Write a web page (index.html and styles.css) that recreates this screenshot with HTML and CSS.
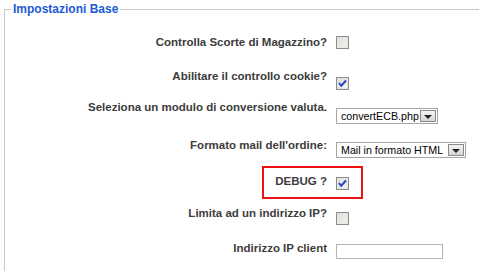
FILE: index.html
```html
<!DOCTYPE html>
<html lang="it">
<head>
    <meta charset="UTF-8">
    <title>Impostazioni Base</title>
    <link rel="stylesheet" href="styles.css">
</head>
<body>
    <fieldset class="settings">
        <legend>Impostazioni Base</legend>
        <div class="rows">
            <div class="row">
                <label class="row-label">Controlla Scorte di Magazzino?</label>
                <div class="row-value up">
                    <span class="checkbox"></span>
                </div>
            </div>
            <div class="row">
                <label class="row-label">Abilitare il controllo cookie?</label>
                <div class="row-value down">
                    <span class="checkbox checked">
                        <svg width="11" height="11" viewBox="0 0 11 11"><path d="M2 5 L4.2 7.8 L9 2.5" fill="none" stroke="#2340c8" stroke-width="2"/></svg>
                    </span>
                </div>
            </div>
            <div class="row">
                <label class="row-label">Seleziona un modulo di conversione valuta.</label>
                <div class="row-value">
                    <div class="select select-small">
                        <span class="select-text">convertECB.php</span>
                        <span class="select-arrow"></span>
                    </div>
                </div>
            </div>
            <div class="row">
                <label class="row-label">Formato mail dell'ordine:</label>
                <div class="row-value">
                    <div class="select select-wide">
                        <span class="select-text">Mail in formato HTML</span>
                        <span class="select-arrow"></span>
                    </div>
                </div>
            </div>
            <div class="row">
                <label class="row-label">DEBUG ?</label>
                <div class="row-value mid">
                    <span class="checkbox checked">
                        <svg width="11" height="11" viewBox="0 0 11 11"><path d="M2 5 L4.2 7.8 L9 2.5" fill="none" stroke="#2340c8" stroke-width="2"/></svg>
                    </span>
                </div>
                <div class="mark"></div>
            </div>
            <div class="row">
                <label class="row-label">Limita ad un indirizzo IP?</label>
                <div class="row-value low">
                    <span class="checkbox"></span>
                </div>
            </div>
            <div class="row">
                <label class="row-label">Indirizzo IP client</label>
                <div class="row-value mid">
                    <span class="text-input"></span>
                </div>
            </div>
        </div>
    </fieldset>
</body>
</html>
```

FILE: styles.css
```css
html, body {
    height: 100%;
}
body {
    margin: 0;
    background: #ffffff;
    font-family: "Liberation Sans", Arial, sans-serif;
    overflow: hidden;
}
.settings {
    margin: 2px 0 0 4px;
    padding: 0;
    border: none;
    border-top: 1px solid #c8c8c8;
    border-left: 1px solid #c8c8c8;
    height: 269px;
    box-sizing: border-box;
}
.settings legend {
    font-size: 12px;
    font-weight: bold;
    color: #1a5ad6;
    padding: 0 2px;
    margin-left: 6px;
    line-height: 14px;
}
.rows {
    display: grid;
    grid-template-rows: 34px 31px 38px 36px 32px 35px 30px;
    margin-top: 19px;
}
.row {
    display: flex;
    align-items: flex-start;
    position: relative;
}
.row-label {
    width: 322px;
    text-align: right;
    font-size: 11.5px;
    font-weight: bold;
    color: #3c3c3c;
    line-height: 14px;
    white-space: nowrap;
}
.row-value {
    margin-left: 9px;
}
.row-value.up { margin-top: 1px; }
.row-value.mid { margin-top: 3px; }
.row-value.low { margin-top: 6px; }
.row-value.down { margin-top: 8px; }
.row:nth-child(3) .row-value { margin-top: 8px; }
.row:nth-child(4) .row-value { margin-top: 4px; }
.checkbox {
    display: block;
    width: 13px;
    height: 13px;
    box-sizing: border-box;
    border: 1px solid #8c8c8c;
    background: linear-gradient(135deg, #dcdcd6, #f6f6f2);
    box-shadow: inset 0 0 0 1px #e6e6e0;
    position: relative;
}
.checkbox svg {
    position: absolute;
    left: 0;
    top: 0;
}
.select {
    display: flex;
    align-items: center;
    height: 16px;
    box-sizing: border-box;
    border: 1px solid #a5a5a5;
    padding: 0 1px;
    background: #fff;
}
.select-small { width: 102px; }
.select-wide { width: 130px; }
.select-text {
    flex: 1;
    font-size: 10.7px;
    color: #000;
    padding-left: 3px;
    white-space: nowrap;
    overflow: hidden;
}
.select-arrow {
    width: 16px;
    height: 12px;
    box-sizing: border-box;
    border: 1px solid #8a8a8a;
    background: linear-gradient(#f4f4f4, #d6d6d6);
    position: relative;
}
.select-arrow::after {
    content: "";
    position: absolute;
    left: 3px;
    top: 4px;
    border-left: 4px solid transparent;
    border-right: 4px solid transparent;
    border-top: 4px solid #222;
}
.text-input {
    display: block;
    width: 107px;
    height: 15px;
    box-sizing: border-box;
    border: 1px solid #b4b4b4;
    background: #fff;
}
.mark {
    position: absolute;
    left: 257px;
    top: -8px;
    width: 101px;
    height: 33px;
    box-sizing: border-box;
    border: 2px solid #ee1111;
}
```
